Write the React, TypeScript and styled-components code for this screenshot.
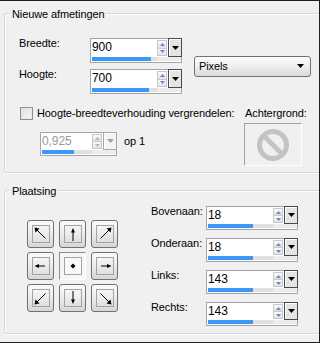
import React from "react";
import styled, { createGlobalStyle } from "styled-components";

const GlobalStyle = createGlobalStyle`
  html, body {
    margin: 0;
    padding: 0;
    background: #f0f0f0;
  }
  body {
    font-family: "Liberation Sans", Arial, sans-serif;
    font-size: 11px;
    letter-spacing: -0.1px;
    color: #000;
  }
`;

const Window = styled.div`
  width: 320px;
  height: 343px;
  box-sizing: border-box;
  border-top: 1px solid #1e1e1e;
  border-right: 1px solid #1e1e1e;
  border-bottom: 1px solid #1e1e1e;
  background: #f0f0f0;
  padding: 12px 0 0 4px;
  overflow: hidden;
`;

const Group = styled.section<{ $h: number; $mt?: number }>`
  position: relative;
  height: ${(p) => p.$h}px;
  margin-top: ${(p) => p.$mt ?? 0}px;
  box-sizing: border-box;
  border: 1px solid #d0dae2;
  border-right: none;
  border-radius: 3px 0 0 3px;
  box-shadow: inset 1px 1px 0 #fff, 0 1px 0 #fff;
`;

const Legend = styled.span`
  position: absolute;
  top: -6px;
  left: 5px;
  padding: 0 2px;
  line-height: 13px;
  background: #f0f0f0;
`;

/* ---------- top group ---------- */

const SizeArea = styled.div`
  display: flex;
  align-items: center;
  padding: 24px 0 0 14px;
`;

const SizeFields = styled.div`
  display: flex;
  flex-direction: column;
  gap: 6px;
`;

const FieldRow = styled.div`
  display: flex;
  align-items: flex-start;
`;

const RowLabel = styled.span<{ $w: number }>`
  width: ${(p) => p.$w}px;
  line-height: 13px;
  margin-top: -1px;
`;

const Select = styled.div`
  width: 117px;
  height: 21px;
  margin-left: 12px;
  box-sizing: border-box;
  border: 1px solid #727272;
  border-radius: 3px;
  background: linear-gradient(#fdfdfd, #eeeeee 50%, #dadada);
  display: flex;
  align-items: center;
  justify-content: space-between;
  padding: 0 6px 0 4px;
  line-height: 13px;
`;

const LockArea = styled.div`
  display: flex;
  padding: 13px 0 0 15px;
`;

const LockLeft = styled.div`
  width: 224px;
  display: flex;
  flex-direction: column;
`;

const CheckRow = styled.label`
  display: flex;
  align-items: center;
  gap: 4px;
  height: 13px;
  line-height: 13px;
`;

const CheckBox = styled.span`
  width: 13px;
  height: 13px;
  box-sizing: border-box;
  border: 1px solid #8e8e8e;
  background: linear-gradient(135deg, #dcdcdc, #f8f8f8);
  box-shadow: inset 0 0 0 1px #e6e6e6;
`;

const RatioRow = styled.div`
  display: flex;
  align-items: flex-start;
  gap: 7px;
  margin: 12px 0 0 20px;
`;

const OpText = styled.span`
  line-height: 13px;
  margin-top: 3px;
`;

const BgColumn = styled.div`
  display: flex;
  flex-direction: column;
  gap: 3px;
`;

const BgLabel = styled.span`
  line-height: 13px;
  padding-left: 1px;
`;

const BgSwatch = styled.div`
  width: 58px;
  height: 43px;
  box-sizing: border-box;
  border: 1px solid;
  border-color: #a0a0a0 #ffffff #ffffff #a0a0a0;
  display: flex;
  align-items: center;
  justify-content: center;
`;

/* ---------- spin control ---------- */

const SpinBox = styled.div<{ $w: number; $row: number }>`
  width: ${(p) => p.$w}px;
  box-sizing: border-box;
  border: 1px solid #a5a5a5;
  background: #fff;
  display: grid;
  grid-template-columns: 1fr 11px 13px;
  grid-template-rows: ${(p) => p.$row}px 4px;
  padding-bottom: 1px;
`;

const SpinValue = styled.span<{ $disabled?: boolean }>`
  font-size: 12px;
  line-height: 17px;
  padding-left: 1px;
  color: ${(p) => (p.$disabled ? "#9a9a9a" : "#000")};
`;

const SpinArrows = styled.div`
  display: flex;
  flex-direction: column;
  padding: 1px 1px 1px 0;
`;

const SpinHalf = styled.span`
  flex: 1;
  display: flex;
  align-items: center;
  justify-content: center;
  border: 1px solid #c8c8c8;
  background: linear-gradient(#fbfbfb, #e2e2e2);
  & + & {
    border-top: none;
  }
`;

const DropButton = styled.span<{ $disabled?: boolean }>`
  margin: -1px -1px 0 0;
  box-sizing: border-box;
  border: 1px solid ${(p) => (p.$disabled ? "#a8a8a8" : "#4a4a4a")};
  background: ${(p) => (p.$disabled ? "#f4f4f4" : "#e4e4e4")};
  box-shadow: inset 1px 1px 0 #fff;
  display: flex;
  align-items: center;
  justify-content: center;
`;

const Track = styled.div`
  margin-left: 1px;
  background: #e0e0e0;
  display: flex;
`;

const Fill = styled.div`
  background: #3a98f8;
`;

const TrackEnd = styled.div`
  grid-column: 2 / 4;
  background: #ececec;
`;

const Caret = ({ color }: { color: string }) => (
  <svg width="7" height="4" viewBox="0 0 7 4">
    <polygon points="0,0 7,0 3.5,4" fill={color} />
  </svg>
);

const SpinTri = ({ up, color }: { up?: boolean; color: string }) => (
  <svg width="5" height="3" viewBox="0 0 5 3">
    <polygon points={up ? "0,3 5,3 2.5,0" : "0,0 5,0 2.5,3"} fill={color} />
  </svg>
);

type SpinProps = {
  value: string;
  fill: number;
  width: number;
  row?: number;
  disabled?: boolean;
};

function Spin({ value, fill, width, row = 18, disabled }: SpinProps) {
  const tri = disabled ? "#b8b8b8" : "#6a86c8";
  return (
    <SpinBox $w={width} $row={row}>
      <SpinValue $disabled={disabled}>{value}</SpinValue>
      <SpinArrows>
        <SpinHalf>
          <SpinTri up color={tri} />
        </SpinHalf>
        <SpinHalf>
          <SpinTri color={tri} />
        </SpinHalf>
      </SpinArrows>
      <DropButton $disabled={disabled}>
        <Caret color={disabled ? "#a0a0a0" : "#000"} />
      </DropButton>
      <Track>
        <Fill style={{ width: `${fill * 100}%` }} />
      </Track>
      <TrackEnd />
    </SpinBox>
  );
}

/* ---------- placement group ---------- */

const PlaceArea = styled.div`
  display: flex;
  align-items: center;
  padding: 15px 0 0 22px;
`;

const NavGrid = styled.div`
  display: grid;
  grid-template-columns: repeat(3, 27px);
  grid-template-rows: repeat(3, 28px);
  column-gap: 5px;
  row-gap: 4px;
`;

const NavButton = styled.button<{ $active?: boolean }>`
  width: 27px;
  height: 28px;
  padding: 0;
  box-sizing: border-box;
  border: 1px solid ${(p) => (p.$active ? "#8c8c8c" : "#717171")};
  border-right-color: ${(p) => (p.$active ? "#ffffff" : "#717171")};
  border-bottom-color: ${(p) => (p.$active ? "#ffffff" : "#717171")};
  border-radius: ${(p) => (p.$active ? "0" : "3px")};
  background: ${(p) =>
    p.$active
      ? "#f6f6f6"
      : "linear-gradient(#fafafa, #eeeeee 45%, #d6d6d6)"};
  display: flex;
  align-items: center;
  justify-content: center;
`;

const NavInner = styled.span<{ $active?: boolean }>`
  width: 18px;
  height: 18px;
  box-sizing: border-box;
  border: 1px solid #a3a3a3;
  background: ${(p) => (p.$active ? "#f8f8f8" : "transparent")};
  display: flex;
  align-items: center;
  justify-content: center;
`;

const Offsets = styled.div`
  display: flex;
  flex-direction: column;
  gap: 8px;
  margin-left: 33px;
`;

type Dir = "nw" | "n" | "ne" | "w" | "c" | "e" | "sw" | "s" | "se";

const arrows: Record<Dir, { line?: string; head: string }> = {
  nw: { line: "M12.5 12.5 L4 4", head: "1.5,1.5 6.5,2.5 2.5,6.5" },
  n: { line: "M8 15 V5", head: "8,2 6,6.5 10,6.5" },
  ne: { line: "M3.5 12.5 L12 4", head: "14.5,1.5 9.5,2.5 13.5,6.5" },
  w: { line: "M12 8 H5", head: "1.5,8 6,6 6,10" },
  c: { head: "8,5.5 10.5,8 8,10.5 5.5,8" },
  e: { line: "M4 8 H11", head: "14.5,8 10,6 10,10" },
  sw: { line: "M12.5 3.5 L4 12", head: "1.5,14.5 2.5,9.5 6.5,13.5" },
  s: { line: "M8 1 V11", head: "8,14 6,9.5 10,9.5" },
  se: { line: "M3.5 3.5 L12 12", head: "14.5,14.5 13.5,9.5 9.5,13.5" },
};

const NavGlyph = ({ dir }: { dir: Dir }) => {
  const a = arrows[dir];
  return (
    <svg width="16" height="16" viewBox="0 0 16 16">
      {a.line && <path d={a.line} stroke="#000" strokeWidth="1" fill="none" />}
      <polygon points={a.head} fill="#000" />
    </svg>
  );
};

const dirs: Dir[] = ["nw", "n", "ne", "w", "c", "e", "sw", "s", "se"];

const offsets = [
  { label: "Bovenaan:", value: "18" },
  { label: "Onderaan:", value: "18" },
  { label: "Links:", value: "143" },
  { label: "Rechts:", value: "143" },
];

export default function App() {
  return (
    <>
      <GlobalStyle />
      <Window>
        <Group $h={160}>
          <Legend>Nieuwe afmetingen</Legend>
          <SizeArea>
            <SizeFields>
              <FieldRow>
                <RowLabel $w={71}>Breedte:</RowLabel>
                <Spin value="900" fill={0.906} width={92} />
              </FieldRow>
              <FieldRow>
                <RowLabel $w={71}>Hoogte:</RowLabel>
                <Spin value="700" fill={0.875} width={92} />
              </FieldRow>
            </SizeFields>
            <Select>
              <span>Pixels</span>
              <Caret color="#000" />
            </Select>
          </SizeArea>
          <LockArea>
            <LockLeft>
              <CheckRow>
                <CheckBox />
                <span>Hoogte-breedteverhouding vergrendelen:</span>
              </CheckRow>
              <RatioRow>
                <Spin value="0,925" fill={0.64} width={77} row={17} disabled />
                <OpText>op 1</OpText>
              </RatioRow>
            </LockLeft>
            <BgColumn>
              <BgLabel>Achtergrond:</BgLabel>
              <BgSwatch>
                <svg width="34" height="34" viewBox="0 0 34 34">
                  <circle cx="17" cy="17" r="13.5" stroke="#c3c3c3" strokeWidth="5" fill="none" />
                  <path d="M7.5 7.5 L26.5 26.5" stroke="#c3c3c3" strokeWidth="5" />
                </svg>
              </BgSwatch>
            </BgColumn>
          </LockArea>
        </Group>

        <Group $h={144} $mt={17}>
          <Legend>Plaatsing</Legend>
          <PlaceArea>
            <NavGrid>
              {dirs.map((d) => (
                <NavButton key={d} $active={d === "c"}>
                  <NavInner $active={d === "c"}>
                    <NavGlyph dir={d} />
                  </NavInner>
                </NavButton>
              ))}
            </NavGrid>
            <Offsets>
              {offsets.map((o) => (
                <FieldRow key={o.label}>
                  <RowLabel $w={55}>{o.label}</RowLabel>
                  <Spin value={o.value} fill={0.69} width={92} row={17} />
                </FieldRow>
              ))}
            </Offsets>
          </PlaceArea>
        </Group>
      </Window>
    </>
  );
}
